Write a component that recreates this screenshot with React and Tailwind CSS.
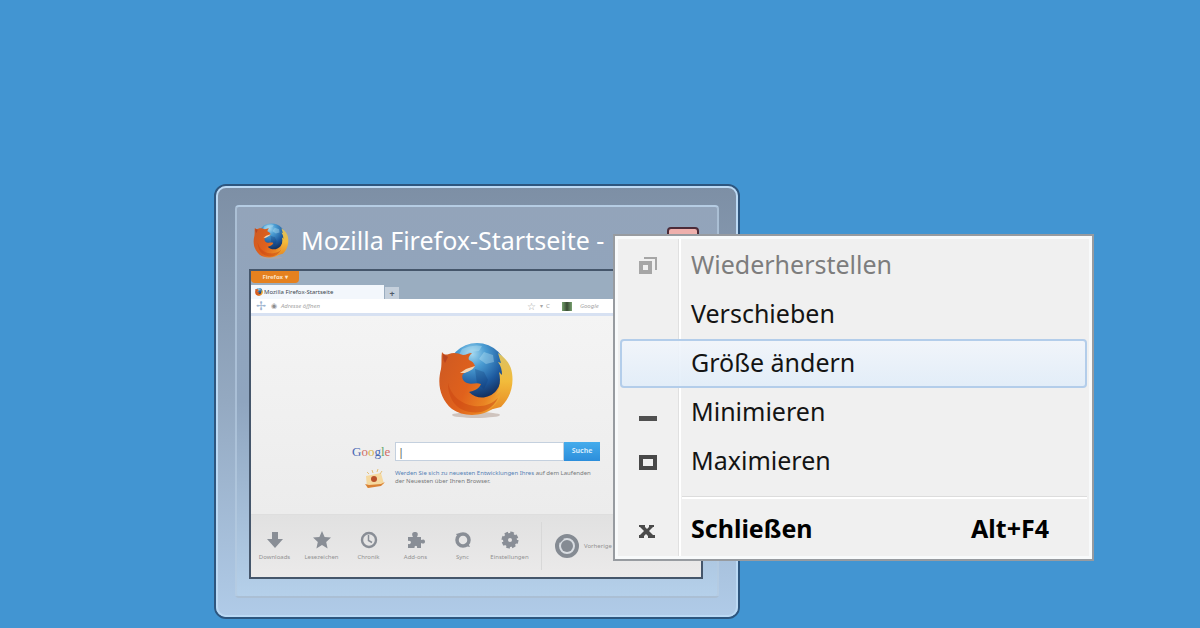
import React, { useState } from "react";

const menuItems = [
  { label: "Wiederherstellen", icon: "restore", disabled: true },
  { label: "Verschieben" },
  { label: "Größe ändern" },
  { label: "Minimieren", icon: "minimize" },
  { label: "Maximieren", icon: "maximize" },
];

const launchers = [
  { label: "Downloads", icon: "download" },
  { label: "Lesezeichen", icon: "star" },
  { label: "Chronik", icon: "clock" },
  { label: "Add-ons", icon: "puzzle" },
  { label: "Sync", icon: "sync" },
  { label: "Einstellungen", icon: "gear" },
];

function FirefoxLogo({ className, id }) {
  return (
    <svg viewBox="0 0 76 76" className={className} aria-hidden="true">
      <defs>
        <radialGradient id={`${id}-globe`} cx="42%" cy="18%" r="75%">
          <stop offset="0" stopColor="#a4d8f0" />
          <stop offset="0.3" stopColor="#4b9dd3" />
          <stop offset="0.7" stopColor="#1d5a9f" />
          <stop offset="1" stopColor="#14305f" />
        </radialGradient>
        <linearGradient id={`${id}-fox`} x1="0" y1="0.2" x2="1" y2="0.6">
          <stop offset="0" stopColor="#cf5a22" />
          <stop offset="0.45" stopColor="#e0611c" />
          <stop offset="0.75" stopColor="#ea8423" />
          <stop offset="1" stopColor="#f3b83c" />
        </linearGradient>
        <linearGradient id={`${id}-tail`} x1="0" y1="0" x2="0" y2="1">
          <stop offset="0" stopColor="#d9c265" />
          <stop offset="0.5" stopColor="#f2bb3b" />
          <stop offset="1" stopColor="#e78a24" />
        </linearGradient>
      </defs>
      <ellipse cx="38" cy="73" rx="24" ry="3" fill="#b9a79d" opacity="0.6" />
      <circle cx="39" cy="31" r="30" fill={`url(#${id}-globe)`} />
      <path d="M24 7q10-5 20-3l-3 5-10 1-4 4-7 1zM46 10l9 3 1 7-8 2-7-5z" fill="#c6ebf7" opacity="0.35" />
      <path d="M37 27l9 3 4 8-4 9-7-5z" fill="#123a77" opacity="0.3" />
      <path
        d="M4 10c2 3 4 3 7 2 4-2 9-1 14 1 3 0 6-2 9-2-3 3-4 5-3 7 3 1 5 3 6 6-3 4-8 5-12 8-2 3 0 8 4 9 5 2 9-1 14 1-2 5-7 7-12 8 8 8 20 7 27-1 4-5 5-10 6-15l9-2c-1 14-7 26-17 34-12 9-31 9-42 1C2 57-1 42 3 27c1-7 0-12 1-17z"
        fill={`url(#${id}-fox)`}
      />
      <path
        d="M60 11c8 5 13 12 14 20 2 13-2 25-11 34l-12 3c7-5 11-11 12-18l-6 4c5-7 6-16 4-24l3 3c0-5-1-9-4-13l3 1z"
        fill={`url(#${id}-tail)`}
      />
      <path d="M5 12l5 3-3 6c-2-3-2-6-2-9z" fill="#b94520" />
      <path d="M22 31l6-4 6-2 3-1c-2 4-6 5-10 7z" fill="#f2d5b4" />
      <path d="M10 41c3 13 13 21 26 23 10 1 18-2 24-8-6 12-17 16-28 14-14-2-22-14-22-29z" fill="#c9440f" opacity="0.5" />
    </svg>
  );
}

function LaunchIcon({ name }) {
  return (
    <svg viewBox="0 0 18 18" className="h-[18px] w-[18px]" fill="#898e96" aria-hidden="true">
      {name === "download" && <path d="M6 1h6v7h5l-8 9-8-9h5z" />}
      {name === "star" && <path d="M9 0l2.6 6 6.4.6-4.8 4.4 1.4 6.5L9 14l-5.6 3.5L4.8 11 0 6.600 6.400 6z" />}
      {name === "clock" && (
        <g fill="none" stroke="#898e96">
          <circle cx="9" cy="9" r="7" strokeWidth="2.4" />
          <path d="M8.500 4v5.500l3.500 2" strokeWidth="1.500" />
        </g>
      )}
      {name === "puzzle" && (
        <path d="M1 6h5C4 2 6 1 8 1s4 1 2 5h4v3c3-1.500 4 0 4 1.500S17 13.500 14 12v5h-4c1-3-3-3-2.500 0H1v-4c4 1 4-4 0-3z" />
      )}
      {name === "sync" && (
        <g>
          <circle cx="9" cy="9" r="6" fill="none" stroke="#898e96" strokeWidth="3.500" />
          <path d="M10 13l4-1 2 4-5-1zM2 3l4-1-2 4z" />
        </g>
      )}
      {name === "gear" && (
        <g fill="none" stroke="#898e96">
          <circle cx="9" cy="9" r="7" strokeWidth="3" strokeDasharray="3.500 2" />
          <circle cx="9" cy="9" r="4.500" strokeWidth="5" />
        </g>
      )}
    </svg>
  );
}

function MenuIcon({ name }) {
  return (
    <svg viewBox="0 0 20 20" className="h-5 w-5" aria-hidden="true">
      {name === "restore" && (
        <g fill="none" stroke="#a6a6a6">
          <path d="M6 2h12v12" strokeWidth="2" />
          <path d="M3 7h9v9H3z" strokeWidth="4" />
        </g>
      )}
      {name === "minimize" && <path d="M1 13h18v5H1z" fill="#505050" />}
      {name === "maximize" && <path d="M3 5h14v11H3z" fill="none" stroke="#484848" strokeWidth="4" />}
      {name === "close" && (
        <path
          d="M1 5h6v2l2 2 2-2V5h5v2h-1l-4 4 4 4h2v3h-7v-2l-2-2-2 2v2H1v-3h1l4-4-4-4H1z"
          fill="#4a4a4a"
        />
      )}
    </svg>
  );
}

function BrowserPreview() {
  return (
    <div className="flex flex-col border-2 border-[#45566b] bg-[#9aadc0]">
      <div className="flex h-[14px] items-start">
        <button className="h-3 w-12 rounded-b-sm bg-[#e5811f] text-center text-[6px] leading-[10px] font-bold text-[#fbe3c6]">
          Firefox ▾
        </button>
      </div>
      <div className="flex h-[14px] items-end gap-px">
        <div className="flex h-[14px] w-[133px] items-center gap-px bg-[#f3f7fc] px-1 text-[6px] text-[#404750]">
          <FirefoxLogo id="tab" className="h-2 w-2" />
          Mozilla Firefox-Startseite
        </div>
        <button aria-label="Neuer Tab" className="h-3 w-[14px] bg-[#c5d0dc] text-[9px] leading-[11px] font-bold text-[#4e5b6a]">
          +
        </button>
      </div>
      <div className="flex h-[17px] items-center border-b-3 border-[#d7e1f2] bg-white text-[6px] text-[#a5a5a5]">
        <span className="w-5 text-center text-[12px] leading-3 text-[#9fb5cf]">✢</span>
        <span className="text-[7px] text-[#8e8e8e]">◉</span>
        <span className="ml-1 w-[246px] italic">Adresse öffnen</span>
        <span className="text-[10px] leading-3">☆</span>
        <span className="ml-1">▾&nbsp; C</span>
        <span className="ml-3 h-[9px] w-[10px] bg-linear-to-r from-[#76a36d] via-[#384b33] to-[#79a270]" />
        <span className="ml-2 italic">Google</span>
      </div>
      <div className="flex h-[198px] flex-col items-center bg-linear-to-b from-[#f4f4f4] to-[#ececec] pt-[26px]">
        <FirefoxLogo id="main" className="h-[76px] w-[76px]" />
        <div className="mt-6 w-[248px]">
          <div className="flex items-center">
            <span className="w-[43px] font-['Liberation_Serif',serif] text-[13px] leading-[18px]">
              <span className="text-[#4768b4]">G</span>
              <span className="text-[#cf6d66]">o</span>
              <span className="text-[#d7b44b]">o</span>
              <span className="text-[#4768b4]">g</span>
              <span className="text-[#63a66d]">l</span>
              <span className="text-[#cf6d66]">e</span>
            </span>
            <input
              aria-label="Google-Suche"
              defaultValue="|"
              className="h-[19px] w-[169px] border border-[#c4d0de] bg-white px-[2px] text-[11px] text-[#555] outline-none"
            />
            <button className="h-[19px] w-9 bg-linear-to-b from-[#45acec] to-[#2c8edb] text-[7px] font-bold text-[#cfe9fb]">
              Suche
            </button>
          </div>
          <div className="mt-2 flex gap-2 pl-[11px]">
            <svg viewBox="0 0 24 20" className="h-5 w-6 shrink-0" aria-hidden="true">
              <path d="M3 7l15-3 3 11-17 4z" fill="#f5d9a0" />
              <path d="M2 15l3 4 13-2 4-4-4 2-12 1z" fill="#d98135" />
              <path d="M4 3l2 2M9 1l1 3M15 0l-1 3M19 2l-2 3" stroke="#e5c079" />
              <circle cx="11" cy="10" r="3" fill="#b8502a" />
            </svg>
            <p className="text-[6px] leading-2 whitespace-nowrap text-[#77797c]">
              <a href="#" className="text-[#5481b5]">Werden Sie sich zu neuesten Entwicklungen Ihres</a> auf dem Laufenden
              <br />
              der Neuesten über Ihren Browser.
            </p>
          </div>
        </div>
      </div>
      <div className="flex h-[63px] items-center overflow-hidden border-t border-[#dedede] bg-linear-to-b from-[#e1e1e1] to-[#ebeaea]">
        {launchers.map((item) => (
          <button key={item.label} className="flex w-[47px] shrink-0 flex-col items-center gap-1 text-[6px] leading-[8px] text-[#929292]">
            <LaunchIcon name={item.icon} />
            {item.label}
          </button>
        ))}
        <div className="ml-2 flex h-12 shrink-0 items-center gap-1 border-l border-[#d8d8d8] pl-3">
          <svg viewBox="0 0 26 26" className="h-[26px] w-[26px]" aria-hidden="true">
            <circle cx="13" cy="13" r="10" fill="#d9dde2" stroke="#858b93" strokeWidth="4" />
            <circle cx="13" cy="13" r="6" fill="#858b93" />
            <path d="M5 4l5 2-4 4z" fill="#858b93" />
          </svg>
          <span className="text-[6px] text-[#929292]">Vorherige Sitzung</span>
        </div>
      </div>
    </div>
  );
}

function WindowThumbnail() {
  return (
    <section className="absolute top-[184px] left-[214px] w-[526px] rounded-xl border-2 border-[#2d567f] bg-linear-to-b from-[#7d8fa5] via-[#94a9c1] to-[#b0cbe8]">
      <div className="rounded-[10px] border-2 border-[#bcdaf5] p-[17px]">
        <div className="rounded-sm border-2 border-[#b5cbe0]/70 bg-linear-to-b from-[#93a4ba] via-[#8fa5bf] to-[#b5d0ea] pr-[14px] pb-[17px] pl-3">
          <header className="flex h-[62px] items-center gap-3 px-1 pt-[6px]">
            <FirefoxLogo id="title" className="h-9 w-9" />
            <h1 className="flex-1 text-[25px] whitespace-nowrap text-white">Mozilla Firefox-Startseite -</h1>
            <button aria-label="Schließen" className="h-7 w-8 rounded border-2 border-[#4c2b38] bg-[#eeb0ad]" />
          </header>
          <BrowserPreview />
        </div>
      </div>
    </section>
  );
}

function SystemMenu() {
  const [active, setActive] = useState("Größe ändern");

  return (
    <div role="menu" className="absolute top-[234px] left-[613px] w-[481px] border-2 border-[#979ba0] bg-[#f0f0f0]">
      <div className="relative border-3 border-[#f8fafb] p-[2px]">
        <div className="absolute inset-y-0 left-[60px] w-[3px] border-l border-[#e0e0e0] bg-white" />
        <div className="relative">
          {menuItems.map((item) => (
            <button
              key={item.label}
              role="menuitem"
              disabled={item.disabled}
              onMouseEnter={() => setActive(item.label)}
              className={`flex h-[49px] w-full items-center rounded border-2 text-left text-[25px] ${
                active === item.label
                  ? "border-[#b3cdea] bg-linear-to-b from-[#f1f5fb]/90 to-[#e1edf9]/90"
                  : "border-transparent"
              } ${item.disabled ? "text-[#7d7d7d]" : "text-[#141414]"}`}
            >
              <span className="flex w-[69px] pl-4">
                <MenuIcon name={item.icon} />
              </span>
              <span className="pb-[2px]">{item.label}</span>
            </button>
          ))}
          <div className="mt-[10px] mb-[6px] ml-[62px] h-[3px] border-t border-[#dcdcdc] bg-white" />
          <button
            role="menuitem"
            className="flex h-[49px] w-full items-center border-2 border-transparent pr-9 text-left text-[25px] font-bold text-black"
          >
            <span className="flex w-[69px] pl-4">
              <MenuIcon name="close" />
            </span>
            <span className="flex-1 pb-[2px]">Schließen</span>
            <span className="pb-[2px]">Alt+F4</span>
          </button>
        </div>
      </div>
    </div>
  );
}

function App() {
  return (
    <main className="relative min-h-screen overflow-hidden bg-[#4295d2] font-['Noto_Sans','Open_Sans',sans-serif]">
      <WindowThumbnail />
      <SystemMenu />
    </main>
  );
}

export default App;
